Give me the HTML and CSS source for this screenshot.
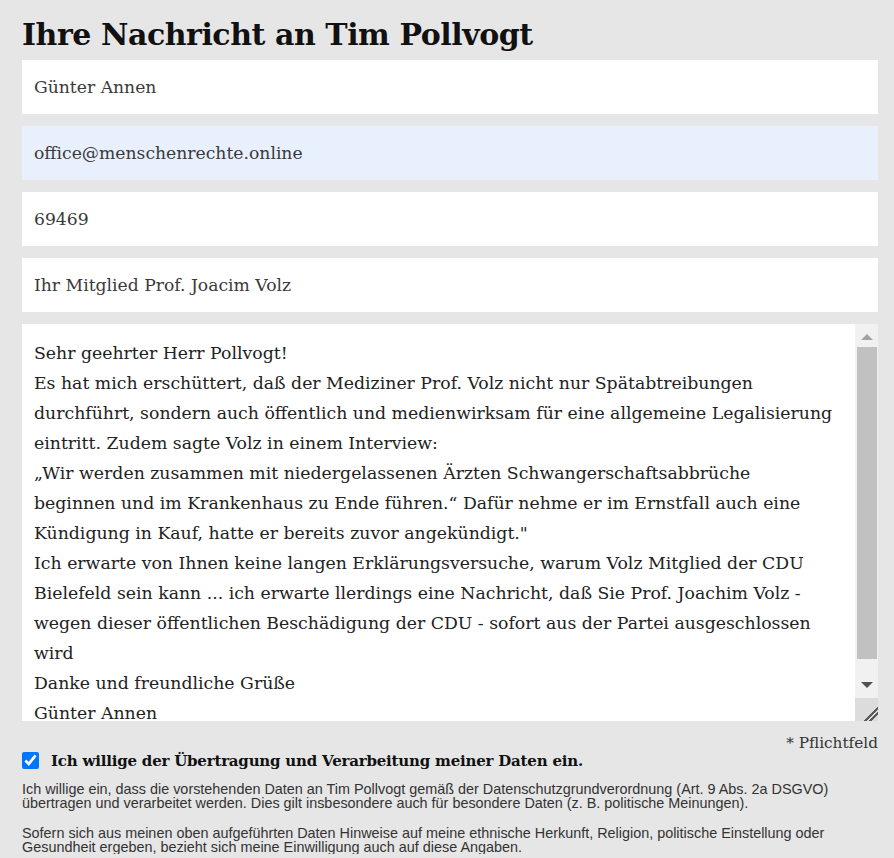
FILE: index.html
```html
<!DOCTYPE html>
<html lang="de">
<head>
	<meta charset="UTF-8">
	<meta name="viewport" content="width=device-width, initial-scale=1.0">
	<title>Ihre Nachricht an Tim Pollvogt</title>
	<link rel="stylesheet" href="styles.css">
</head>
<body>
	<div class="page">
		<h1 class="title">Ihre Nachricht an Tim Pollvogt</h1>
		<form class="msg_form">
			<!-- Absender -->
			<div class="fields">
				<input class="field" type="text" name="name" value="Günter Annen">
				<input class="field field_autofill" type="email" name="email" value="office@menschenrechte.online">
				<input class="field" type="text" name="plz" value="69469">
				<input class="field" type="text" name="subject" value="Ihr Mitglied Prof. Joacim Volz">
				<!-- Nachricht mit Scrollbar -->
				<div class="message">
					<textarea class="message_text" name="message">Sehr geehrter Herr Pollvogt!
Es hat mich erschüttert, daß der Mediziner Prof. Volz nicht nur Spätabtreibungen
durchführt, sondern auch öffentlich und medienwirksam für eine allgemeine Legalisierung
eintritt. Zudem sagte Volz in einem Interview:
„Wir werden zusammen mit niedergelassenen Ärzten Schwangerschaftsabbrüche
beginnen und im Krankenhaus zu Ende führen.“ Dafür nehme er im Ernstfall auch eine
Kündigung in Kauf, hatte er bereits zuvor angekündigt."
Ich erwarte von Ihnen keine langen Erklärungsversuche, warum Volz Mitglied der CDU
Bielefeld sein kann ... ich erwarte llerdings eine Nachricht, daß Sie Prof. Joachim Volz -
wegen dieser öffentlichen Beschädigung der CDU - sofort aus der Partei ausgeschlossen
wird
Danke und freundliche Grüße
Günter Annen</textarea>
					<div class="scrollbar" aria-hidden="true">
						<span class="scroll_btn scroll_up"></span>
						<span class="scroll_track"><span class="scroll_thumb"></span></span>
						<span class="scroll_btn scroll_down"></span>
						<span class="scroll_corner"></span>
					</div>
				</div>
			</div>
			<div class="required">* Pflichtfeld</div>
			<!-- Einwilligung -->
			<label class="consent">
				<input class="consent_box" type="checkbox" checked>
				<span>Ich willige der Übertragung und Verarbeitung meiner Daten ein.</span>
			</label>
			<p class="legal">Ich willige ein, dass die vorstehenden Daten an Tim Pollvogt gemäß der Datenschutzgrundverordnung (Art. 9 Abs. 2a DSGVO) übertragen und verarbeitet werden. Dies gilt insbesondere auch für besondere Daten (z. B. politische Meinungen).</p>
			<p class="legal">Sofern sich aus meinen oben aufgeführten Daten Hinweise auf meine ethnische Herkunft, Religion, politische Einstellung oder Gesundheit ergeben, bezieht sich meine Einwilligung auch auf diese Angaben.</p>
		</form>
	</div>
</body>
</html>
```

FILE: styles.css
```css
* {
	margin: 0;
	padding: 0;
	box-sizing: border-box;
}
body {
	background-color: #e6e6e6;
	font-family: "DejaVu Serif", serif;
	color: #222;
}
/* Seite */
.page {
	padding: 0 16px 0 22px;
}
.title {
	font-size: 30px;
	line-height: 50px;
	padding-top: 10px;
	color: #111;
	letter-spacing: -0.45px;
}
/* Formularfelder */
.fields {
	display: flex;
	flex-direction: column;
	gap: 12px;
}
.field {
	display: block;
	width: 100%;
	height: 54px;
	border: none;
	outline: none;
	background-color: #fff;
	padding: 0 12px;
	font-family: "DejaVu Serif", serif;
	font-size: 17.2px;
	color: #3a3a3a;
}
.field_autofill {
	background-color: #e8f0fe;
}
/* Nachricht */
.message {
	display: flex;
	height: 397px;
	background-color: #fff;
}
.message_text {
	flex: 1;
	border: none;
	outline: none;
	resize: none;
	overflow: hidden;
	background-color: transparent;
	padding: 14px 12px;
	font-family: "DejaVu Serif", serif;
	font-size: 17.3px;
	line-height: 30px;
	color: #222;
}
.scrollbar {
	width: 23px;
	display: flex;
	flex-direction: column;
	background-color: #f1f1f1;
}
.scroll_btn {
	height: 23px;
	display: flex;
	justify-content: center;
}
.scroll_btn::before {
	content: "";
	width: 0;
	height: 0;
	border-left: 6px solid transparent;
	border-right: 6px solid transparent;
}
.scroll_up {
	padding-top: 10px;
}
.scroll_up::before {
	border-bottom: 6px solid #a3a3a3;
}
.scroll_down {
	padding-top: 7px;
}
.scroll_down::before {
	border-top: 6px solid #505050;
}
.scroll_track {
	flex: 1;
	padding: 0 1px 0 2px;
}
.scroll_thumb {
	display: block;
	height: 312px;
	background-color: #c1c1c1;
}
.scroll_corner {
	height: 23px;
	background-color: #dcdcdc;
	background-image: linear-gradient(135deg, transparent 69%, #5a5a5a 69%, #5a5a5a 74%, transparent 74%, transparent 80%, #5a5a5a 80%, #5a5a5a 85%, transparent 85%);
}
/* Pflichtfeld */
.required {
	text-align: right;
	font-size: 15.3px;
	line-height: 17px;
	color: #333;
	margin-top: 14px;
}
/* Einwilligung */
.consent {
	display: flex;
	align-items: center;
	gap: 12px;
	font-size: 15px;
	font-weight: bold;
	letter-spacing: -0.2px;
	color: #111;
	line-height: 16px;
}
.consent_box {
	width: 17px;
	height: 17px;
	accent-color: #0075ff;
}
.legal {
	font-family: "Liberation Sans", Arial, sans-serif;
	font-size: 14.4px;
	line-height: 14px;
	color: #333;
	margin-top: 13px;
}
.legal + .legal {
	margin-top: 16px;
}
```
